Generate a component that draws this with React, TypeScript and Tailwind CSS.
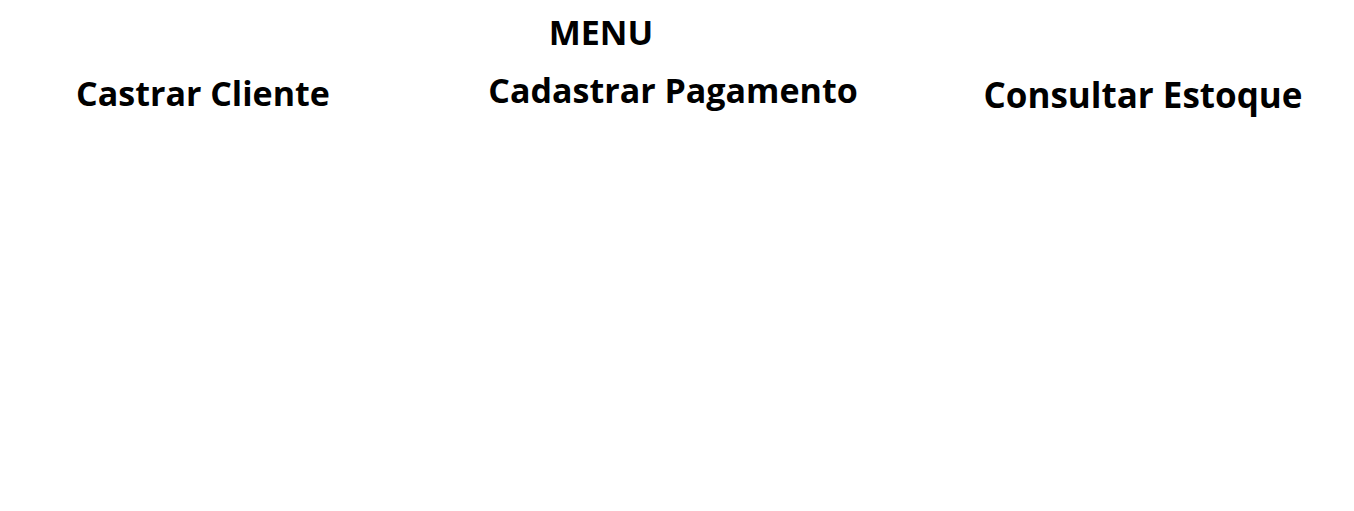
import React from 'react';

const items = [
  { label: 'Castrar Cliente', cls: 'mt-[3px] text-[34px]' },
  { label: 'Cadastrar Pagamento', cls: 'mt-0 text-[34px]' },
  { label: 'Consultar Estoque', cls: 'mt-[5px] text-[35px]' },
];

export default function App() {
  return (
    <main className="w-[1354px] h-[511px] bg-white text-black font-['Open_Sans',sans-serif] font-bold">
      {/* Title */}
      <div className="pl-[548px] pt-[8px]">
        <h1 className="text-[34px] leading-[48px] w-[106px] text-center">MENU</h1>
      </div>

      {/* Options */}
      <nav className="flex pl-[3px] gap-[70px] mt-[10px]">
        {items.map((item) => (
          <a key={item.label} className={`w-[400px] text-center leading-[48px] whitespace-nowrap ${item.cls}`}>
            {item.label}
          </a>
        ))}
      </nav>
    </main>
  );
}
